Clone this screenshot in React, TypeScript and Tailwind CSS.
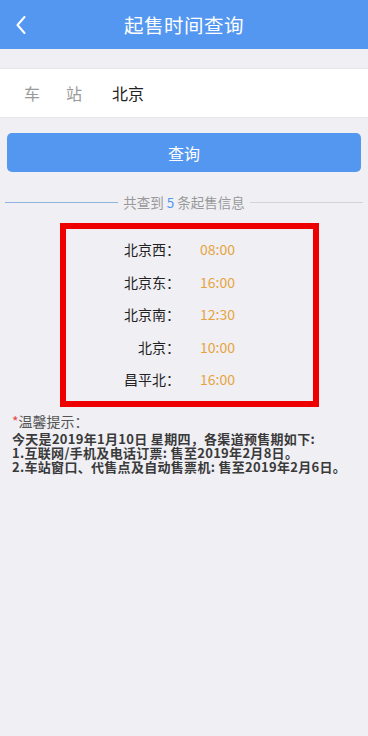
import React from "react";

const font = { fontFamily: '"Noto Sans CJK SC", "Noto Sans", sans-serif' };

const rows = [
  { name: "北京西", time: "08:00" },
  { name: "北京东", time: "16:00" },
  { name: "北京南", time: "12:30" },
  { name: "北京", time: "10:00" },
  { name: "昌平北", time: "16:00" },
];

export default function App() {
  return (
    <div className="w-[368px] h-[736px] bg-[#efeff4]" style={font}>
      <header className="relative h-[49px] bg-[#5497f0] flex items-center justify-center">
        <svg className="absolute left-[15px] top-[15px]" width="12" height="20" viewBox="0 0 12 20" fill="none">
          <path d="M9.5 2L2.5 10L9.5 18" stroke="white" strokeWidth="2" strokeLinecap="round" strokeLinejoin="round" />
        </svg>
        <h1 className="text-white text-[19.5px] leading-none tracking-[0.5px]">起售时间查询</h1>
      </header>

      <div className="mt-[19px] h-[50px] bg-white flex items-center border-y border-[#e6e6ea]">
        <span className="ml-[24px] text-[16px] text-[#9a9a9a]">车</span>
        <span className="ml-[26px] text-[16px] text-[#9a9a9a]">站</span>
        <span className="ml-[30px] text-[16px] text-[#222]">北京</span>
      </div>

      <div className="px-[7px] mt-[15px]">
        <button className="w-full h-[39px] rounded-[5px] bg-[#5497f0] text-white text-[16px]">查询</button>
      </div>

      <div className="mt-[24px] flex items-center px-[5px]">
        <div className="flex-1 h-px bg-[#8fb3de]" />
        <span className="px-[5px] text-[13.5px] leading-none text-[#999]">
          共查到 <span className="text-[#5497f0]">5</span> 条起售信息
        </span>
        <div className="flex-1 h-px bg-[#d2d2d6]" />
      </div>

      <div className="mt-[13px] ml-[60px] w-[259px] h-[184px] border-[6px] border-[#ee0000] flex flex-col justify-center">
        {rows.map((r) => (
          <div key={r.time + r.name} className="flex items-center h-[32.5px]">
            <span className="w-[114px] text-right text-[14px] text-[#222]">{r.name}：</span>
            <span className="ml-[20px] text-[14px] text-[#e7a43d]">{r.time}</span>
          </div>
        ))}
      </div>

      <div className="mt-[5px] px-[12px]">
        <p className="text-[14px] leading-[18px] text-[#555]">
          <span className="text-[#e84848]">*</span>温馨提示：
        </p>
        <div className="mt-[2px] text-[13px] leading-[14px] font-bold text-[#3a3a3a] tracking-[0.3px]">
          <p>今天是2019年1月10日 星期四，各渠道预售期如下:</p>
          <p>1.互联网/手机及电话订票: 售至2019年2月8日。</p>
          <p>2.车站窗口、代售点及自动售票机: 售至2019年2月6日。</p>
        </div>
      </div>
    </div>
  );
}
